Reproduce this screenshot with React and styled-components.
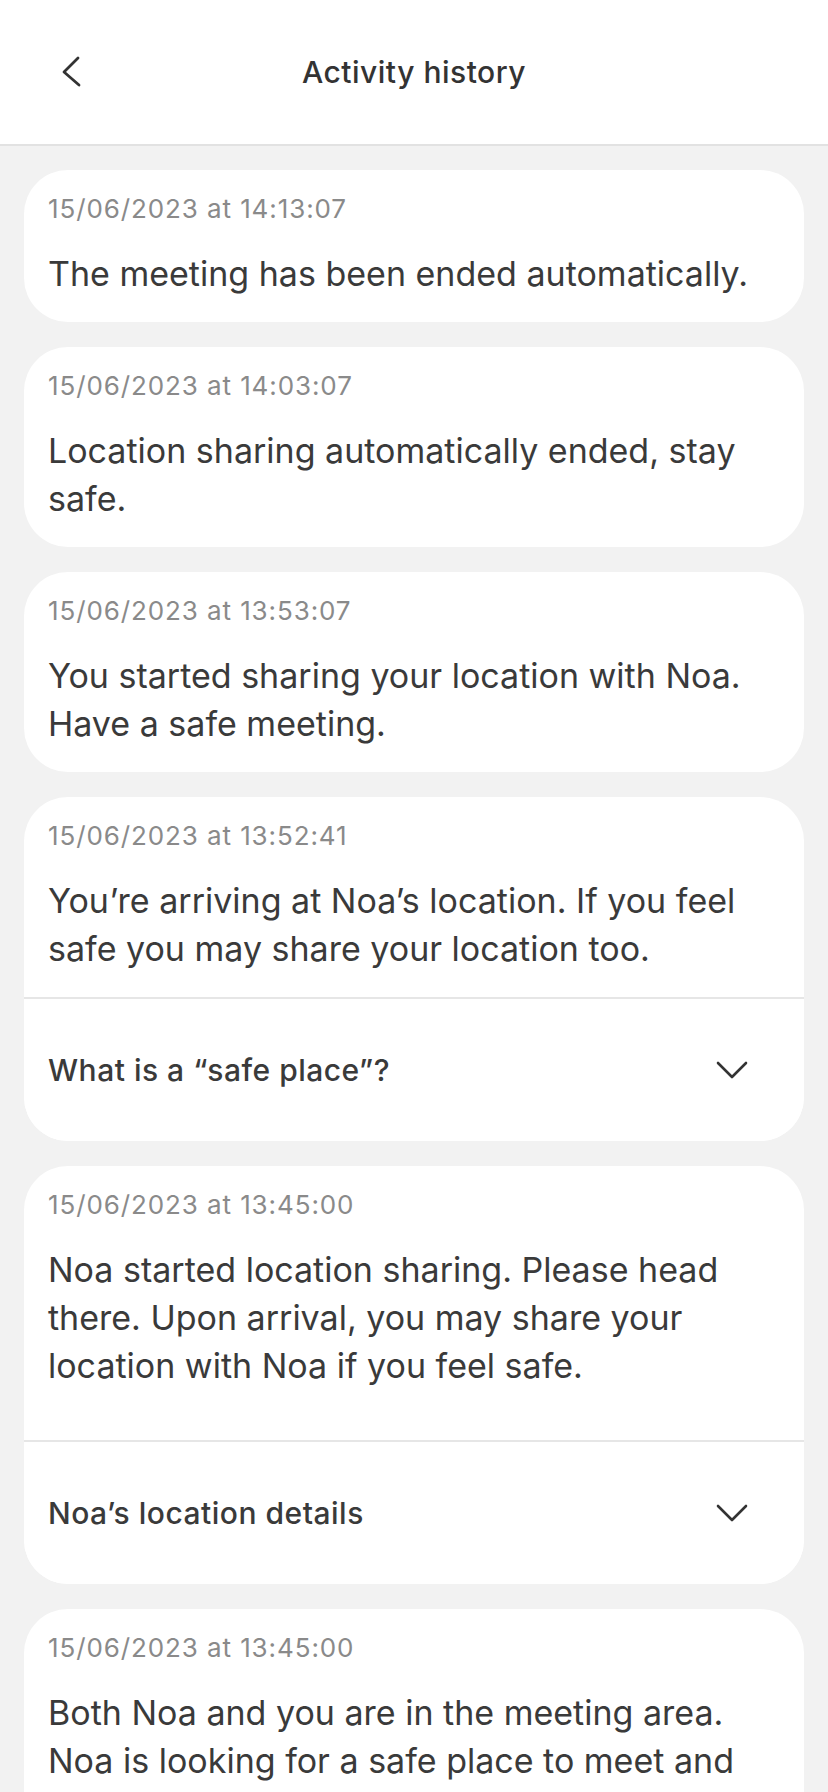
import React from "react";
import styled, { createGlobalStyle } from "styled-components";

const Global = createGlobalStyle`
  html, body { margin: 0; padding: 0; background: #f2f2f2; }
  body { font-family: Inter, "Noto Sans", Roboto, sans-serif; color: #3a3a3a; -webkit-font-smoothing: antialiased; }
  * { box-sizing: border-box; }
`;

const Page = styled.div`
  min-height: 1792px;
  background: #f2f2f2;
`;

const Header = styled.header`
  height: 146px;
  background: #fff;
  border-bottom: 2px solid #e2e2e2;
  display: grid;
  grid-template-columns: 1fr auto 1fr;
  align-items: center;
`;

const BackButton = styled.button`
  justify-self: start;
  margin-left: 58px;
  width: 26px;
  height: 34px;
  padding: 0;
  border: 0;
  background: none;
  display: flex;
  align-items: center;
  justify-content: center;
  color: #333;
`;

const Title = styled.h1`
  margin: 0;
  font-size: 30px;
  font-weight: 500;
  letter-spacing: 0.5px;
  color: #333;
`;

const List = styled.main`
  display: flex;
  flex-direction: column;
  gap: 25px;
  padding: 24px 24px 24px;
`;

const Card = styled.section`
  background: #fff;
  border-radius: 44px;
  overflow: hidden;
`;

const CardBody = styled.div`
  padding: 23px 24px ${(p) => (p.$extra ? "50px" : "24px")};
`;

const Stamp = styled.div`
  font-size: 26px;
  line-height: 32px;
  color: #8a8a8a;
  letter-spacing: 0.9px;
`;

const Message = styled.p`
  margin: 25px 0 0;
  font-size: 34px;
  line-height: 48px;
  color: #3a3a3a;
  letter-spacing: 0;
`;

const Divider = styled.hr`
  margin: 0;
  border: 0;
  height: 2px;
  background: #e6e6e6;
`;

const AccordionRow = styled.button`
  width: 100%;
  height: 142px;
  border: 0;
  background: #fff;
  padding: 0 56px 0 24px;
  display: flex;
  align-items: center;
  justify-content: space-between;
  font-family: inherit;
  font-size: 30px;
  font-weight: 500;
  color: #3a3a3a;
  letter-spacing: 0.5px;
  text-align: left;
`;

const Chevron = () => (
  <svg width="32" height="20" viewBox="0 0 32 20" fill="none">
    <path d="M2 3 L16 17 L30 3" stroke="#333" strokeWidth="2.6" strokeLinecap="round" strokeLinejoin="round" />
  </svg>
);

const BackIcon = () => (
  <svg width="22" height="32" viewBox="0 0 22 32" fill="none">
    <path d="M18 2 L4 16 L19 29" stroke="#333" strokeWidth="2.8" strokeLinecap="round" strokeLinejoin="round" />
  </svg>
);

const items = [
  { time: "15/06/2023 at 14:13:07", text: "The meeting has been ended automatically." },
  { time: "15/06/2023 at 14:03:07", text: "Location sharing automatically ended, stay safe." },
  { time: "15/06/2023 at 13:53:07", text: "You started sharing your location with Noa. Have a safe meeting." },
  {
    time: "15/06/2023 at 13:52:41",
    text: "You\u2019re arriving at Noa\u2019s location. If you feel safe you may share your location too.",
    accordion: "What is a \u201csafe place\u201d?",
  },
  {
    time: "15/06/2023 at 13:45:00",
    text: "Noa started location sharing. Please head there. Upon arrival, you may share your location with Noa if you feel safe.",
    accordion: "Noa\u2019s location details",
    extra: true,
  },
  {
    time: "15/06/2023 at 13:45:00",
    text: "Both Noa and you are in the meeting area. Noa is looking for a safe place to meet and will share the location with you soon.",
  },
];

export default function App() {
  return (
    <Page>
      <Global />
      <Header>
        <BackButton aria-label="Back">
          <BackIcon />
        </BackButton>
        <Title>Activity history</Title>
        <span />
      </Header>
      <List>
        {items.map((it, i) => (
          <Card key={i}>
            <CardBody $extra={it.extra}>
              <Stamp>{it.time}</Stamp>
              <Message>{it.text}</Message>
            </CardBody>
            {it.accordion && (
              <>
                <Divider />
                <AccordionRow>
                  <span>{it.accordion}</span>
                  <Chevron />
                </AccordionRow>
              </>
            )}
          </Card>
        ))}
      </List>
    </Page>
  );
}
